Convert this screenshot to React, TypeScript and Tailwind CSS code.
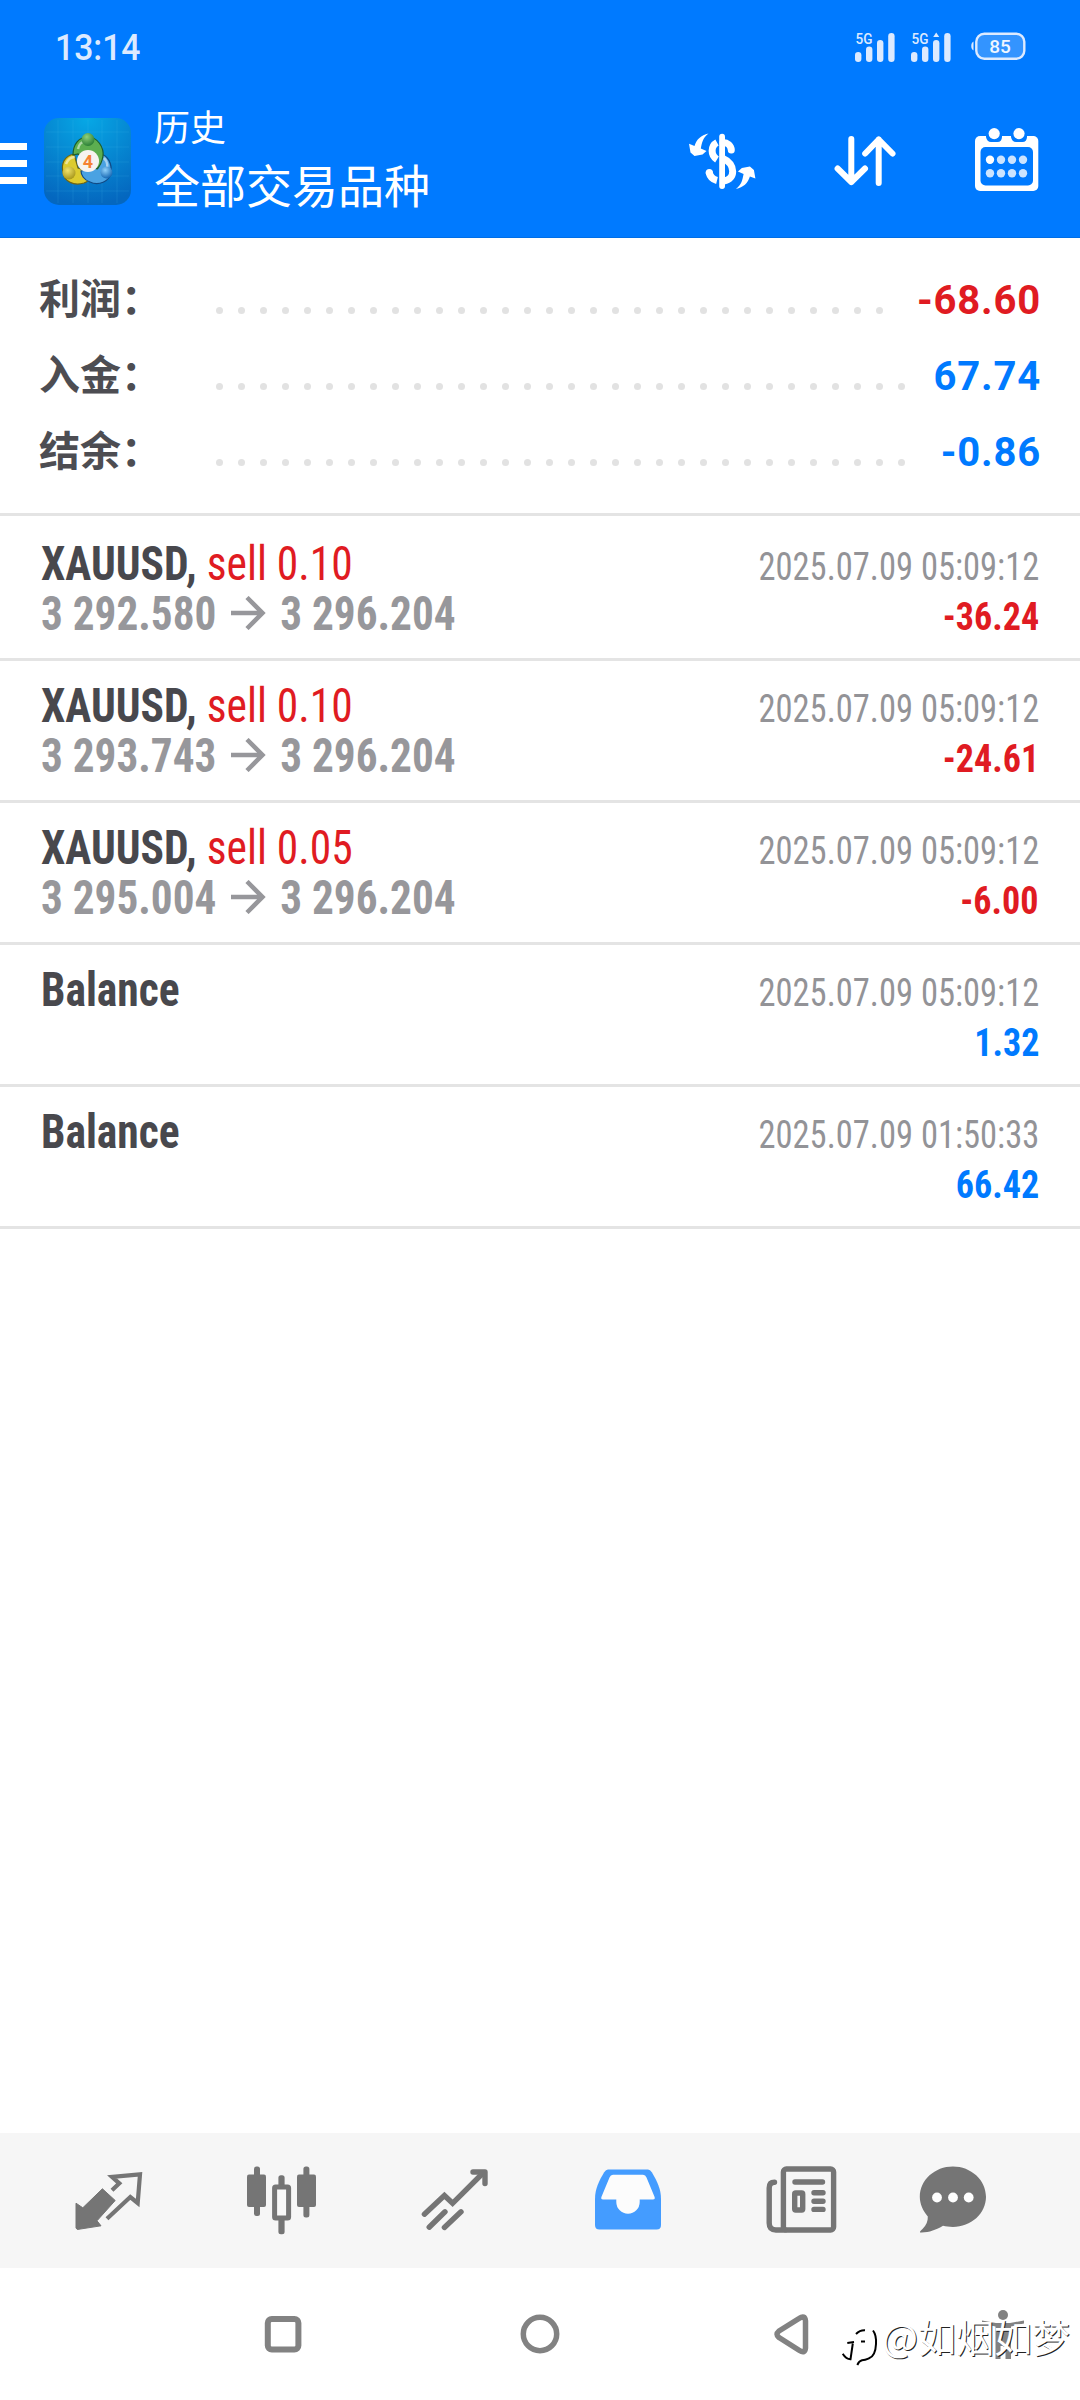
import type { ReactNode } from "react"

type Deal = {
  id: number
  symbol: string
  action?: string
  open?: string
  close?: string
  time: string
  profit: string
}

const summary = [
  { label: "利润：", value: "-68.60", dots: 31, negative: true },
  { label: "入金：", value: "67.74", dots: 32, negative: false },
  { label: "结余：", value: "-0.86", dots: 32, negative: false },
]

const deals: Deal[] = [
  { id: 1, symbol: "XAUUSD,", action: "sell 0.10", open: "3 292.580", close: "3 296.204", time: "2025.07.09 05:09:12", profit: "-36.24" },
  { id: 2, symbol: "XAUUSD,", action: "sell 0.10", open: "3 293.743", close: "3 296.204", time: "2025.07.09 05:09:12", profit: "-24.61" },
  { id: 3, symbol: "XAUUSD,", action: "sell 0.05", open: "3 295.004", close: "3 296.204", time: "2025.07.09 05:09:12", profit: "-6.00" },
  { id: 4, symbol: "Balance", time: "2025.07.09 05:09:12", profit: "1.32" },
  { id: 5, symbol: "Balance", time: "2025.07.09 01:50:33", profit: "66.42" },
]

function Signal({ roaming }: { roaming?: boolean }) {
  return (
    <svg width="42" height="32" viewBox="0 0 42 32" fill="#dceaff">
      <text x="0.5" y="13.5" fontSize="15" fontWeight="500" fontFamily="Roboto, sans-serif" textLength="17" lengthAdjust="spacingAndGlyphs">5G</text>
      <rect x="0" y="22" width="6.4" height="10" rx="3.2" />
      <rect x="11" y="16.5" width="6.4" height="15.5" rx="3.2" />
      <rect x="22" y="10" width="6.4" height="22" rx="3.2" />
      <rect x="33.2" y="3" width="6.4" height="29" rx="3.2" />
      {roaming && <path d="M25.2 2.5 L28.2 7 H22.2 Z" />}
    </svg>
  )
}

function StatusBar() {
  return (
    <div className="flex h-[92px] items-center pr-[54px] pl-[55px] text-[#dceaff]">
      <span className="mt-[2px] origin-left scale-x-[0.91] font-[Roboto,sans-serif] text-[37px] leading-none font-medium">13:14</span>
      <div className="ml-auto flex items-center">
        <Signal />
        <span className="w-[14px]" />
        <Signal roaming />
        <span className="w-[17px]" />
        <svg width="56" height="30" viewBox="0 0 56 30">
          <path d="M3.5 10.5 C0.5 12 0.5 18 3.5 19.5 Z" fill="#dceaff" />
          <rect x="6.3" y="2.7" width="48" height="25" rx="8" fill="#ffffff33" stroke="#dceaff" strokeWidth="2.4" />
          <text x="30" y="22" textAnchor="middle" fontSize="19" fontWeight="500" fontFamily="Roboto, sans-serif" fill="#f0f6ff">85</text>
        </svg>
      </div>
    </div>
  )
}

function AppLogo() {
  return (
    <svg width="87" height="87" viewBox="0 0 87 87">
      <defs>
        <radialGradient id="tile" cx="0.5" cy="0" r="1">
          <stop offset="0" stopColor="#06a8e6" />
          <stop offset="0.5" stopColor="#0688d2" />
          <stop offset="1" stopColor="#0467bf" />
        </radialGradient>
        <radialGradient id="green" cx="0.4" cy="0.3" r="0.7">
          <stop offset="0" stopColor="#8fd07a" />
          <stop offset="1" stopColor="#2a7f36" />
        </radialGradient>
        <radialGradient id="yellow" cx="0.4" cy="0.3" r="0.7">
          <stop offset="0" stopColor="#f1e36c" />
          <stop offset="1" stopColor="#a8971c" />
        </radialGradient>
        <radialGradient id="blue" cx="0.4" cy="0.3" r="0.7">
          <stop offset="0" stopColor="#8fd0fa" />
          <stop offset="1" stopColor="#1668b4" />
        </radialGradient>
      </defs>
      <rect width="87" height="87" rx="15" fill="url(#tile)" />
      <path d="M14 2V85M29 2V85M44 2V85M58 2V85M73 2V85M2 14H85M2 29H85M2 44H85M2 58H85M2 73H85" stroke="#5cc8f5" strokeOpacity="0.14" strokeWidth="1" />
      {/* three linked crescents: filled rims around the badge */}
      <g strokeWidth="1.2">
        <path d="M30 36C20 38 17 46 19 54C20 64 30 68 40 65C46 63 47 58 46 54L34 50Z" fill="#dccb2f" stroke="#6f6414" />
        <path d="M56 36C64 37 68 46 67 54C66 64 54 68 46 64C40 62 37 57 37 53L54 50Z" fill="#4aa2e2" stroke="#114a85" />
        <path d="M29 37C29 26 35 19 44 19C54 19 60 30 59 38C58 44 56 48 53 51L34 36Z" fill="#5cae50" stroke="#1d5d2a" />
      </g>
      <path d="M22 46C24 41 28 39 31 39M60 40C64 44 64 49 62 52M34 31C35 26 38 24 40 24" fill="none" stroke="#fff" strokeOpacity="0.5" strokeWidth="2.5" />
      <circle cx="44" cy="21.5" r="6.5" fill="url(#green)" />
      <circle cx="25" cy="55" r="6.5" fill="url(#yellow)" />
      <circle cx="62.5" cy="54.5" r="6" fill="url(#blue)" />
      <circle cx="44" cy="43" r="11" fill="#f6f3f0" />
      <text x="44" y="49.5" textAnchor="middle" fontSize="18" fontWeight="700" fontFamily="Roboto, sans-serif" fill="#f58233">4</text>
    </svg>
  )
}

function CurrencyIcon() {
  const arrow = "M26.5 12.5 C20.5 17 20 22 18.8 27.5 L24.5 30 L20.5 33.5 L12.5 35 L8.5 31.5 L7 22.8 L12.5 25 C14.5 18.5 19 14 26.5 12.5 Z"
  return (
    <svg width="80" height="80" viewBox="0 0 80 80" fill="#fff">
      <rect x="37.2" y="12.7" width="5.8" height="55.2" rx="2.9" />
      <g fill="none" stroke="#fff" strokeWidth="7">
        <path d="M35 21.5 C28.5 25 28.5 34.5 35 38.5" />
        <path d="M41 21.5 C45.5 21.5 49 24.5 49.3 29" strokeLinecap="round" />
        <path d="M41 37.5 C54 43 53.5 58.5 42 60" />
        <path d="M27 51 C28 56 31 58.5 35 59.5" />
      </g>
      <circle cx="27.3" cy="51.5" r="3.6" />
      <path d={arrow} />
      <path d={arrow} transform="rotate(180 40.2 40.2)" />
    </svg>
  )
}

function SortIcon() {
  return (
    <svg width="80" height="80" viewBox="0 0 80 80" fill="none" stroke="#fff" strokeWidth="6" strokeLinecap="round" strokeLinejoin="round">
      <path d="M26.3 18V61M12.6 47.5L26.3 61L40 47.5" />
      <path d="M53.7 62V18.5M40.2 32.5L53.7 18.5L67.5 32.5" />
    </svg>
  )
}

function CalendarIcon() {
  return (
    <svg width="80" height="80" viewBox="0 0 80 80" fill="#fff">
      <rect x="9" y="15" width="63.3" height="55" rx="5" />
      <rect x="14.5" y="26" width="52.5" height="38.5" rx="5" fill="#007aff" />
      <path d="M20 14 V16 Q21 21 25 21 H31.5 Q35.7 21 36 16 V14 Z" fill="#007aff" />
      <path d="M45 14 V16 Q46 21 50 21 H56.5 Q60.7 21 61 16 V14 Z" fill="#007aff" />
      <circle cx="28.2" cy="12.6" r="5.6" />
      <circle cx="53" cy="12.6" r="5.6" />
      {[24, 35, 46, 57].map((x) => (
        <g key={x}>
          <circle cx={x} cy="38.7" r="4.2" fillOpacity={x === 24 ? 1 : 0.8} />
          <circle cx={x} cy="52.3" r="4.2" fillOpacity="0.8" />
        </g>
      ))}
    </svg>
  )
}

function Header() {
  return (
    <header className="h-[238px] border-b border-[#006ee6] bg-[#007aff] text-white">
      <StatusBar />
      <div className="flex h-[145px] pt-[20px] pr-[34px] font-['Noto_Sans_CJK_SC',sans-serif]">
        <div className="mt-[31px] flex w-[27px] flex-col gap-[10px]">
          <span className="h-[7px] bg-white" />
          <span className="h-[7px] bg-white" />
          <span className="h-[7px] bg-white" />
        </div>
        <div className="mt-[6px] ml-[17px]">
          <AppLogo />
        </div>
        <div className="-mt-[7px] ml-[23px] flex flex-col">
          <span className="text-[36px] leading-[40px]">历史</span>
          <span className="mt-[10px] text-[46px] leading-[56px]">全部交易品种</span>
        </div>
        <div className="mt-[9px] ml-auto flex">
          <CurrencyIcon />
          <span className="w-[63px]" />
          <SortIcon />
          <span className="w-[61px]" />
          <CalendarIcon />
        </div>
      </div>
    </header>
  )
}

function Summary() {
  return (
    <section className="h-[278px] border-b-[3px] border-[#e4e4e4] pt-[22px]">
      {summary.map((row) => (
        <div key={row.label} className="flex h-[76px] items-center pr-[39px] pl-[39px]">
          <span className="-mt-[3px] w-[177px] font-['Noto_Sans_CJK_SC',sans-serif] text-[41px] leading-none font-bold text-[#4d4d52]">{row.label}</span>
          <span className="mt-[25px] flex gap-[15px]">
            {Array.from({ length: row.dots }, (_, i) => (
              <span key={i} className="size-[7px] rounded-full bg-[#e2e2e2]" />
            ))}
          </span>
          <span className={`mt-[6px] ml-auto font-[Roboto,sans-serif] text-[40px] leading-none font-bold tracking-[0.8px] ${row.negative ? "text-[#e01b22]" : "text-[#007aff]"}`}>
            {row.value}
          </span>
        </div>
      ))}
    </section>
  )
}

function DealRow({ deal }: { deal: Deal }) {
  const color = deal.profit.startsWith("-") ? "text-[#e01b22]" : "text-[#007aff]"
  return (
    <li className="h-[142px] border-b-[3px] border-[#e4e4e4] pt-[20px] pr-[41px] pl-[41px] font-[Roboto,sans-serif] font-stretch-condensed">
      <div className="flex h-[50px] items-baseline justify-between">
        <span className="origin-left scale-x-[0.906] text-[48px] leading-[50px] font-bold text-[#48484d]">
          {deal.symbol} {deal.action && <span className="font-normal text-[#e01b22]">{deal.action}</span>}
        </span>
        <span className="origin-right scale-x-[0.885] text-[39px] leading-[40px] text-[#939397]">{deal.time}</span>
      </div>
      <div className="flex h-[50px] items-baseline justify-between">
        <span className="flex origin-left scale-x-90 items-baseline text-[48px] leading-[50px] font-bold text-[#97979b]">
          {deal.open}
          {deal.open && (
            <svg className="mr-[16px] ml-[15px]" width="40" height="34" viewBox="0 0 36 34" preserveAspectRatio="none" fill="none" stroke="#97979b" strokeWidth="4.5">
              <path d="M1 17H33M17 1.5L32.5 17L17 32.5" />
            </svg>
          )}
          {deal.close}
          {!deal.open && <span className="h-[50px]">&nbsp;</span>}
        </span>
        <span className={`origin-right scale-x-[0.925] text-[39px] leading-[40px] font-bold ${color}`}>{deal.profit}</span>
      </div>
    </li>
  )
}

function Tab({ wide = true, children }: { wide?: boolean; children: ReactNode }) {
  return (
    <button className={`flex h-full items-center justify-center ${wide ? "w-[173px]" : "w-[130px]"}`}>
      <svg width="80" height="80" viewBox="0 0 80 80" fill="#757575">
        {children}
      </svg>
    </button>
  )
}

function TabBar() {
  return (
    <nav className="flex h-[135px] bg-[#f6f6f6] pl-[22px]">
      {/* quotes */}
      <Tab>
        <path d="M7 42.2L13.8 46.8L33.4 27.8L46.2 39.5L28 59.8L32 64.8L8.3 68.5L7 67Z" strokeLinejoin="round" stroke="#757575" />
        <path d="M43 29.3L50.3 22.4L43 15.8L71 13.3L68.7 42L61.3 36L38 57.8" fill="none" stroke="#757575" strokeWidth="4.2" />
      </Tab>
      {/* chart */}
      <Tab>
        <rect x="5" y="13.5" width="19" height="32.5" rx="2" />
        <rect x="12" y="5.5" width="6" height="49.5" rx="2.5" />
        <rect x="36.4" y="14.2" width="6.2" height="59" rx="2.5" />
        <rect x="32.6" y="26" width="14" height="31" rx="1" fill="#f8f8f8" stroke="#757575" strokeWidth="5" />
        <rect x="55" y="13.5" width="19" height="32.5" rx="2" />
        <rect x="61.4" y="5.5" width="6" height="51" rx="2.5" />
      </Tab>
      {/* trade */}
      <Tab>
        <g fill="none" stroke="#757575" strokeWidth="5.4" strokeLinecap="round">
          <path d="M9.4 53.2L29.4 34.5L37.6 42.3L68 12" />
          <path d="M58 11H70V22.5" strokeLinejoin="round" />
          <path d="M30 50.8L14.2 66.2M46 50.8L29.4 66.5" />
        </g>
      </Tab>
      {/* history, active */}
      <Tab>
        <path fill="#449cff" d="M20 8.5H60Q62 8.5 64 11.5C69 20 73 28 73 38V64Q73 68.5 68.5 68.5H11.5Q7 68.5 7 64V38C7 28 11 20 16 11.5Q18 8.5 20 8.5Z" />
        <path fill="#fcfcfc" d="M25 13.8H55Q57.5 13.8 58.5 16.5L66.6 36Q67.3 38.5 65 38.5H51.7V41A11.7 11.8 0 0 1 28.3 41V38.5H15Q12.7 38.5 13.4 36L21.5 16.5Q22.5 13.8 25 13.8Z" />
      </Tab>
      {/* news */}
      <Tab>
        <g fill="none" stroke="#757575" strokeWidth="5.4" strokeLinecap="round">
          <rect x="22.4" y="8" width="50.2" height="61" rx="3" />
          <path d="M13.5 21.3Q8.2 21.3 8.2 27V62Q8.2 69 15 69H24" />
          <path d="M34 21H61.5M53 31.8H62M53 40.2H62M53 48.4H62" />
          <rect x="33.7" y="32" width="8" height="17" rx="1" />
        </g>
      </Tab>
      {/* messages */}
      <Tab wide={false}>
        <path d="M40.9 5.5C59 5.5 74 19 74 35.8S59 66 40.9 66C37 66 34 65.5 31 64.8C24 69 16 72 8 71.5C7.5 70.5 9 69.5 10.5 68C14.5 64 16 60 15.8 55.5C11 50 7.8 43 7.8 35.8C7.8 19 22.8 5.5 40.9 5.5Z" />
        <g fill="#fff">
          <circle cx="25" cy="36.5" r="4.9" />
          <circle cx="41" cy="36.5" r="4.9" />
          <circle cx="56.7" cy="36.5" r="4.9" />
        </g>
      </Tab>
    </nav>
  )
}

function SystemNav() {
  return (
    <div className="relative flex h-[132px] items-center pl-[261px]">
      <svg width="44" height="44" viewBox="0 0 44 44" fill="none" stroke="#828282" strokeWidth="6">
        <rect x="6.8" y="7" width="30.6" height="30.6" rx="4" />
      </svg>
      <svg className="ml-[213px]" width="44" height="44" viewBox="0 0 44 44" fill="none" stroke="#828282" strokeWidth="5.5">
        <circle cx="22" cy="22" r="16.7" />
      </svg>
      <svg className="ml-[207px]" width="44" height="44" viewBox="0 0 44 44" fill="none" stroke="#828282" strokeWidth="5.5" strokeLinejoin="round">
        <path d="M30 6.5Q36 2.5 36.5 9V36Q36 42 30.5 38.5L10 25.5Q6 22.3 10 19Z" />
      </svg>
      <svg className="ml-[168px]" width="44" height="50" viewBox="0 0 44 50" fill="#828282">
        <circle cx="22" cy="6" r="5" />
        <path d="M1 11.5L15 14H29L43 11.5V14.5L30 17.5V50H24.5V37H19.5V50H14.5V17.5L1 14.5Z" />
      </svg>
      <div className="absolute top-[47px] left-[842px] flex items-center text-white">
        <svg className="mt-[12px]" width="40" height="42" viewBox="0 0 40 42" fill="none" stroke="#000" strokeWidth="2">
          <path d="M0.7 26.7Q4 32 8.5 32.3L10.8 16.5M5.3 16L12 15M14 7Q18 3 23 3.3" />
          <path d="M19 14.5H23" />
          <path d="M31 3.5Q34.5 8 34 17Q33.5 29 27 31.3Q23 33 20 33.3Q17 34 15.3 38" />
        </svg>
        <span className="-mt-[12px] font-['Noto_Sans_CJK_SC',sans-serif] text-[38px] leading-none whitespace-nowrap [text-shadow:1px_1px_0_#222]">@如烟如梦</span>
      </div>
    </div>
  )
}

export default function App() {
  return (
    <div className="flex h-[2400px] w-[1080px] flex-col overflow-hidden bg-white">
      <Header />
      <Summary />
      <ul className="flex-1 pt-[3px]">
        {deals.map((deal) => (
          <DealRow key={deal.id} deal={deal} />
        ))}
      </ul>
      <TabBar />
      <SystemNav />
    </div>
  )
}
